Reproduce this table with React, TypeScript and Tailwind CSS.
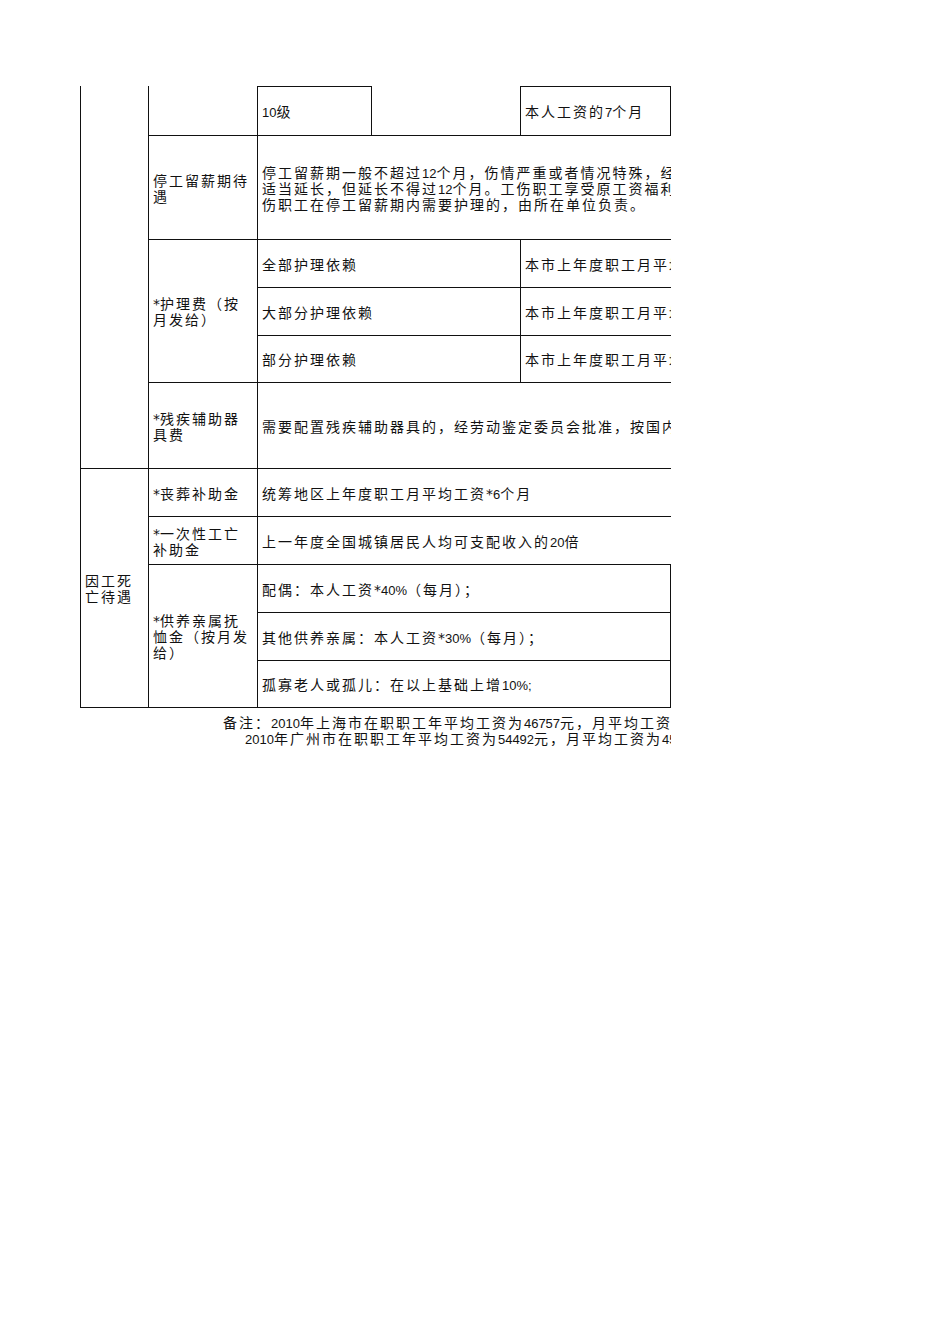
import React from "react";

// splits latin runs (digits, %) out so they get a narrow latin face without the cjk tracking
function Txt({ s }: { s: string }) {
  const parts = s.split(/(\*|[\x20-\x29\x2B-\x7E]+)/);
  return (
    <>
      {parts.map((p, i) =>
        p === "*" ? (
          <span key={i} className="font-['DejaVu_Sans',sans-serif] text-[14px] tracking-normal">
            *
          </span>
        ) : /^[\x20-\x7E]+$/.test(p) ? (
          <span key={i} className="font-['Liberation_Sans',sans-serif] text-[13px] tracking-normal">
            {p}
          </span>
        ) : p ? (
          <span key={i}>{p}</span>
        ) : null
      )}
    </>
  );
}

function Cell({
  className = "",
  lines = [],
}: {
  className?: string;
  lines?: string[];
}) {
  return (
    <div
      className={
        "border-[#111] flex items-center pl-[4px] overflow-hidden whitespace-nowrap " +
        className
      }
    >
      <div className="flex flex-col">
        {lines.map((l, i) => (
          <div key={i} className="h-[16px] leading-[16px]">
            <Txt s={l} />
          </div>
        ))}
      </div>
    </div>
  );
}

export default function App() {
  return (
    <div className="w-[950px] h-[1344px] bg-white pt-[86px] pl-[80px] font-['Noto_Sans_CJK_SC',sans-serif] font-normal text-[14px] tracking-[2px] text-[#111]">
      <div className="w-[591px] overflow-hidden">
        <div className="grid grid-cols-[68px_109px_114px_149px_151px] grid-rows-[49px_104px_48px_48px_47px_86px_48px_48px_48px_48px_48px]">
          {/* 续上页：伤残待遇 */}
          <Cell className="col-start-1 row-start-1 row-span-6 border-l" />
          <Cell className="col-start-2 row-start-1 border-l" />
          <Cell className="col-start-3 row-start-1 border-l border-t" lines={["10级"]} />
          <Cell className="col-start-4 row-start-1 border-l" />
          <Cell className="col-start-5 row-start-1 border-l border-t border-r" lines={["本人工资的7个月"]} />

          {/* 停工留薪期 */}
          <Cell className="col-start-2 row-start-2 border-l border-t" lines={["停工留薪期待", "遇"]} />
          <Cell
            className="col-start-3 col-span-3 row-start-2 border-l border-t"
            lines={[
              "停工留薪期一般不超过12个月，伤情严重或者情况特殊，经设区的市级劳动能力鉴定委员会确认，可以",
              "适当延长，但延长不得过12个月。工伤职工享受原工资福利待遇不变，由所在单位按月支付。生活不能自理的工",
              "伤职工在停工留薪期内需要护理的，由所在单位负责。",
            ]}
          />

          {/* 护理费 */}
          <Cell className="col-start-2 row-start-3 row-span-3 border-l border-t" lines={["*护理费（按", "月发给）"]} />
          <Cell className="col-start-3 col-span-2 row-start-3 border-l border-t" lines={["全部护理依赖"]} />
          <Cell className="col-start-5 row-start-3 border-l border-t" lines={["本市上年度职工月平均工资*50%"]} />
          <Cell className="col-start-3 col-span-2 row-start-4 border-l border-t" lines={["大部分护理依赖"]} />
          <Cell className="col-start-5 row-start-4 border-l border-t" lines={["本市上年度职工月平均工资*40%"]} />
          <Cell className="col-start-3 col-span-2 row-start-5 border-l border-t" lines={["部分护理依赖"]} />
          <Cell className="col-start-5 row-start-5 border-l border-t" lines={["本市上年度职工月平均工资*30%"]} />

          {/* 残疾辅助器具 */}
          <Cell className="col-start-2 row-start-6 border-l border-t" lines={["*残疾辅助器", "具费"]} />
          <Cell
            className="col-start-3 col-span-3 row-start-6 border-l border-t"
            lines={["需要配置残疾辅助器具的，经劳动鉴定委员会批准，按国内普及型标准配置，所需费用由工伤保险基金支付。"]}
          />

          {/* 因工死亡待遇 */}
          <Cell className="col-start-1 row-start-7 row-span-5 border-l border-t border-b" lines={["因工死", "亡待遇"]} />
          <Cell className="col-start-2 row-start-7 border-l border-t" lines={["*丧葬补助金"]} />
          <Cell className="col-start-3 col-span-3 row-start-7 border-l border-t" lines={["统筹地区上年度职工月平均工资*6个月"]} />
          <Cell className="col-start-2 row-start-8 border-l border-t" lines={["*一次性工亡", "补助金"]} />
          <Cell className="col-start-3 col-span-3 row-start-8 border-l border-t" lines={["上一年度全国城镇居民人均可支配收入的20倍"]} />
          <Cell
            className="col-start-2 row-start-9 row-span-3 border-l border-t border-b"
            lines={["*供养亲属抚", "恤金（按月发", "给）"]}
          />
          <Cell className="col-start-3 col-span-3 row-start-9 border-l border-t border-r" lines={["配偶：本人工资*40%（每月）；"]} />
          <Cell className="col-start-3 col-span-3 row-start-10 border-l border-t border-r" lines={["其他供养亲属：本人工资*30%（每月）；"]} />
          <Cell
            className="col-start-3 col-span-3 row-start-11 border-l border-t border-r border-b"
            lines={["孤寡老人或孤儿：在以上基础上增10%;"]}
          />
        </div>

        {/* 备注 */}
        <div className="pt-[6px] whitespace-nowrap">
          <div className="h-[16px] leading-[16px] pl-[143px]">
            <Txt s="备注：2010年上海市在职职工年平均工资为46757元，月平均工资为3896元；" />
          </div>
          <div className="h-[16px] leading-[16px] pl-[165px]">
            <Txt s="2010年广州市在职职工年平均工资为54492元，月平均工资为4541元。" />
          </div>
        </div>
      </div>
    </div>
  );
}
